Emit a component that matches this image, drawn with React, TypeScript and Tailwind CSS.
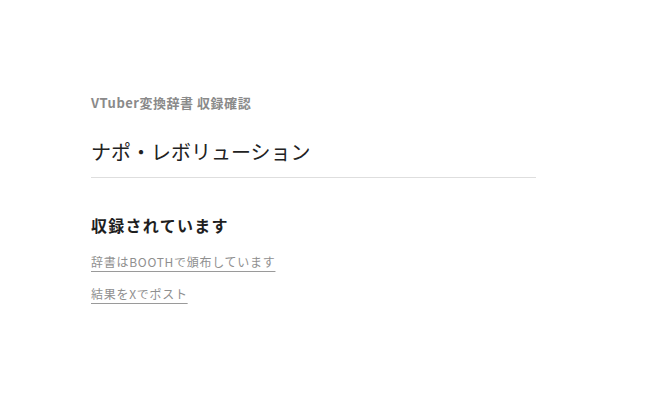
export default function App() {
  return (
    <div
      className="min-h-screen bg-white pt-[94px] pl-[91px]"
      style={{ fontFamily: '"Noto Sans CJK JP", "Noto Sans", sans-serif' }}
    >
      <main className="w-[445px]">
        <p className="text-[13px] font-semibold leading-[18px] tracking-[0.04em] text-[#8a8a8a]">
          VTuber変換辞書 収録確認
        </p>
        <h1 className="mt-[25px] border-b border-[#dedede] pb-[10px] text-[20px] leading-[30px] text-[#222]">
          ナポ・レボリューション
        </h1>
        <section className="mt-[35px]">
          <h2 className="text-[16px] font-bold leading-[24px] tracking-[0.08em] text-[#1f1f1f]">
            収録されています
          </h2>
          <ul className="mt-[13px] space-y-[8px] text-[12px] leading-[24px] tracking-[0.06em] text-[#8f8f8f]">
            <li>
              <a href="#" className="underline decoration-[#9a9a9a] underline-offset-[4px]">
                辞書はBOOTHで頒布しています
              </a>
            </li>
            <li>
              <a href="#" className="underline decoration-[#9a9a9a] underline-offset-[4px]">
                結果をXでポスト
              </a>
            </li>
          </ul>
        </section>
      </main>
    </div>
  )
}
